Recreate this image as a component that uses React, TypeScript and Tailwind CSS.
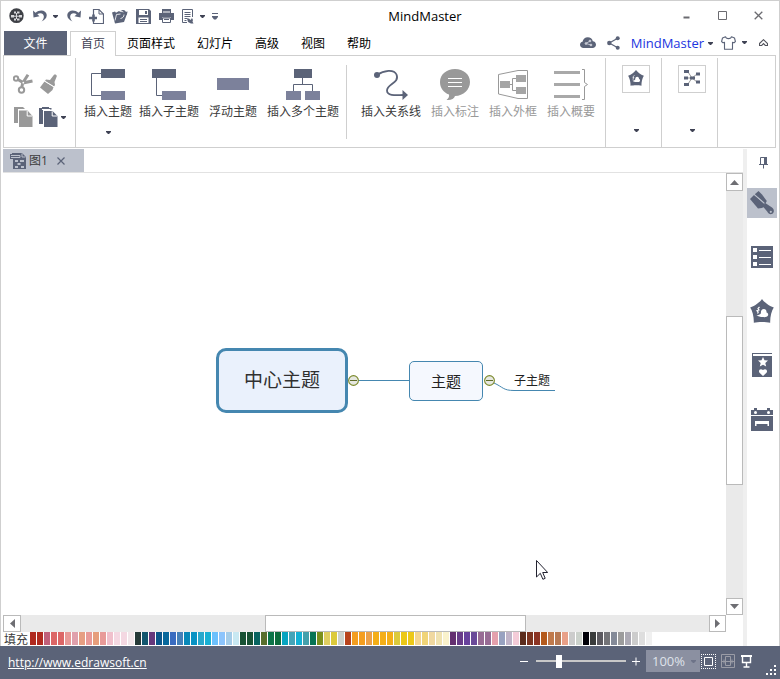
import React, { useState } from 'react';

type IconProps = { className?: string };

const menuTabs = ['页面样式', '幻灯片', '高级', '视图', '帮助'];

const swatches = [
    '#b02a1f', '#b02a1f', '#c0607a', '#dc6666', '#dc6666', '#e89a98', '#e0a0ac', '#e69e82', '#e89a98', '#e69e7c',
    '#e89a98', '#f0c0cc', '#f4d8e2', '#f4d8e2', '#f2e6ea', '#263a38', '#12566e', '#66387c', '#0c568a', '#08689c',
    '#3a6cc0', '#4680b8', '#0888b8', '#0892c4', '#28a8cc', '#18b0d4', '#6cc0fc', '#8cc4fc', '#a4cce8', '#c8e8f2',
    '#185234', '#185234', '#086460', '#586e2c', '#0c7448', '#0c6c3c', '#08a4c0', '#44a4b8', '#14b0d4', '#44a0ac',
    '#087454', '#7c901c', '#e0ce60', '#dcca3c', '#ccd2cc', '#b8441c', '#f49e20', '#f49e20', '#eca048', '#f4ae18',
    '#f4ae18', '#f4ae18', '#dcca3c', '#ecc818', '#ecc818', '#f4d690', '#f0d478', '#f0d8a0', '#f0e2b0', '#faf2cc',
    '#643070', '#683c88', '#68429c', '#6a4a98', '#986c94', '#986c94', '#e4a0ac', '#98a2c0', '#c0b4c8', '#f4ccd8',
    '#5c2c1c', '#7c3420', '#8c3424', '#b45a1c', '#c07a4c', '#b87a54', '#e8a088', '#cccccc', '#ccd2cc', '#000008',
    '#3a3c3c', '#5c5a60', '#747478', '#848a98', '#9c9c9c', '#acaab4', '#cccccc', '#dedede', '#f0f0f0',
];

const Caret = ({ className = 'text-[#3f4254]' }: IconProps) => (
    <svg width="5" height="3" viewBox="0 0 5 3" fill="currentColor" className={`shrink-0 ${className}`}>
        <path d="M0 0h5v1L3 3H2L0 1z" />
    </svg>
);

/* Quick access icons */
const LogoIcon = () => (
    <svg width="15" height="16" viewBox="0 0 15 16">
        <ellipse cx="7.5" cy="7.700" rx="7.2" ry="7.4" fill="#3e4046" />
        <path d="M5 3.500h2v2H5zM8 3.500h2.500v2H8zM2 7h3v2.500H2zM10 7h3v2.500h-3zM5 10.500h2v2H5zM8 10.500h2.500v2H8z" fill="#d8d8dc" />
        <path d="M7.500 5v6M4.500 8.200h6" stroke="#d8d8dc" strokeWidth="1" />
    </svg>
);

const UndoIcon = ({ className = '' }: IconProps) => (
    <svg width="14" height="14" viewBox="0 0 14 14" className={className}>
        <path d="M0 1.500 0.500 8.500 6.500 7.200 4.300 5.300C7 3.300 10.500 4 10.800 7.200c.2 2-.8 3.600-2.300 5.300C12 11 14 8.800 13.700 5.700 13.300 1.200 7-.2 2.500 3.700z" fill="currentColor" />
    </svg>
);

const NewIcon = () => (
    <svg width="15" height="16" viewBox="0 0 15 16" fill="none" stroke="currentColor">
        <path d="M4.500 7V1.500H10L14.500 6v9.500h-10V13" strokeWidth="1.200" />
        <path d="M10 1.500V6h4.500" />
        <path d="M0 10h8M4.500 6.500v7" strokeWidth="2.600" />
    </svg>
);

const OpenIcon = () => (
    <svg width="16" height="15" viewBox="0 0 16 15" fill="currentColor">
        <path d="M0 3.500 3 2.500l1 1.200L7 2l1.500 1L15.500 3.500 12 13 3 14.500z" />
        <path d="M8 2.500C10.500.3 13 .5 14 3l1.500-.8L14.500 6 11 4.500l1.300-.7C11.500 2 10 1.800 8 2.500z" />
        <path d="M3 11.500 4.500 5.500 8.500 5M8.500 9.500c2.500-.5 3.500-2 3.500-4" stroke="#fff" fill="none" strokeWidth=".8" />
    </svg>
);

const SaveIcon = () => (
    <svg width="15" height="15" viewBox="0 0 15 15">
        <path d="M0 0h13l2 2v13H0z" fill="currentColor" />
        <path d="M3 1h9v5H3zM2.500 8.500h10V14h-10z" fill="#fff" />
        <path d="M9 2h2v3H9zM4 10h7v1H4zM4 12h7v1H4z" fill="currentColor" />
    </svg>
);

const PrintIcon = () => (
    <svg width="15" height="14" viewBox="0 0 15 14" fill="currentColor">
        <path d="M3 0h9v4H3zM0 4h15v7h-3V8.500H3V11H0z" />
        <path d="M3.500 9h8v4.500h-8z" fill="#fff" stroke="currentColor" />
        <path d="M5 10h5v1H5z" />
        <path d="M4 2.500h7v1H4z" fill="#fff" />
    </svg>
);

const PreviewIcon = () => (
    <svg width="12" height="15" viewBox="0 0 12 15" fill="none" stroke="currentColor">
        <path d="M5 13.500H.5V.5h10V8M2.500 3.500h6M2.500 5.500h6M2.500 7.500h6M2.500 9.500h3M2.500 11.500h2" />
        <path d="M5 9.500h2l1.500 1.500L10 9l1 2-.5 1.500 1 2H9L6 13z" fill="currentColor" stroke="none" />
    </svg>
);

const MoreIcon = () => (
    <svg width="6" height="7" viewBox="0 0 6 7" fill="currentColor">
        <path d="M0 0h6v1H0zM0 3h6v1L4 6.500H2L0 4z" />
    </svg>
);

/* Account icons */
const CloudIcon = () => (
    <svg width="16" height="11" viewBox="0 0 16 11">
        <path d="M3.500 11C1.500 11 0 9.700 0 7.800 0 6.200 1 5 2.500 4.800 3 2 5 .2 7.800.2c2.500 0 4.500 1.300 5 4C14.700 4.400 16 5.800 16 7.600 16 9.600 14.500 11 12.600 11z" fill="currentColor" />
        <g stroke="#c9ccd6" strokeWidth=".9" fill="#c9ccd6">
            <path d="M10 4 6 6.500l5 1.500" fill="none" />
            <circle cx="10" cy="4" r=".9" />
            <circle cx="6" cy="6.500" r=".9" />
            <circle cx="11" cy="8" r=".9" />
        </g>
    </svg>
);

const ShareIcon = () => (
    <svg width="13" height="14" viewBox="0 0 13 14" fill="currentColor">
        <circle cx="10.700" cy="2.200" r="2" />
        <circle cx="2.300" cy="7" r="2.200" />
        <circle cx="10.700" cy="11.700" r="2" />
        <path d="M10.700 2.200 2.300 7l8.400 4.700" fill="none" stroke="currentColor" strokeWidth="1.200" />
    </svg>
);

const ShirtIcon = () => (
    <svg width="15" height="14" viewBox="0 0 15 14" fill="none" stroke="currentColor" strokeWidth="1.100">
        <path d="M4.500.7 1.500 2 .6 5.500 2 6.800l1.500-.6v7h8v-7l1.500.6 1.400-1.300L13.500 2l-3-1.300C10 3.300 5 3.300 4.500.7z" strokeLinejoin="round" />
    </svg>
);

const CollapseIcon = () => (
    <svg width="9" height="8" viewBox="0 0 9 8" fill="none" stroke="#50515a" strokeWidth="1.100">
        <path d="M.5 4.500 4.500.7l4 3.800v2H6.300L4.500 4.600 2.700 6.500H.5z" />
    </svg>
);

/* Clipboard icons */
const CutIcon = () => (
    <svg width="20" height="20" viewBox="0 0 20 20" fill="none" stroke="#999" strokeWidth="2">
        <circle cx="3" cy="4.500" r="2.200" />
        <circle cx="8.500" cy="16" r="2.700" />
        <path d="M5 5.500 10.500 8.800 19.500 7M8.800 13.300 9.700 9 15 .8" strokeWidth="3" />
        <circle cx="10.300" cy="8.700" r=".9" fill="#fff" stroke="none" />
    </svg>
);

const FormatIcon = () => (
    <svg width="18" height="20" viewBox="0 0 18 20" fill="#999">
        <path d="M14 .8c1.200-1 3.300.2 2.700 1.800L14.500 8l.5 3-1 1.500L5 7l1-1.500 4 .5z" />
        <path d="M4.500 7.500 13.500 13l-1 3-4.500 4L0 13.500z" />
        <path d="M4.500 7l9.500 5.800" stroke="#fff" strokeWidth=".9" />
    </svg>
);

const PagesIcon = () => (
    <svg width="19" height="20" viewBox="0 0 19 20" fill="currentColor">
        <path d="M0 0h9l2 2H4v14H0z" />
        <path d="M5 3.500h8.500L18.500 9v11H5z" />
        <path d="M13.200 3.800V9h5" fill="none" stroke="#fff" />
    </svg>
);

const PasteIcon = () => (
    <svg width="19" height="20" viewBox="0 0 19 20" fill="currentColor">
        <path d="M0 1h3V0h7v1h2.500v1.500H4V17H0z" />
        <path d="M5 4h8.500L18.500 9v11H5z" />
        <path d="M3 2.500h8M13.200 4.300V9h5" fill="none" stroke="#fff" />
    </svg>
);

/* Ribbon icons */
const TopicIcon = () => (
    <svg width="34" height="32" viewBox="0 0 34 32">
        <path d="M10 4.500H.5v22H10" fill="none" stroke="#5b6378" />
        <path d="M10 0h24v9H10z" fill="#5b6378" />
        <path d="M10 22h24v9H10z" fill="#7c819b" />
    </svg>
);

const SubtopicIcon = () => (
    <svg width="34" height="32" viewBox="0 0 34 32">
        <path d="M4.500 9v17.500H10" fill="none" stroke="#5b6378" />
        <path d="M0 0h24v9H0z" fill="#5b6378" />
        <path d="M10 22h24v9H10z" fill="#7c819b" />
    </svg>
);

const FloatingIcon = () => (
    <svg width="32" height="32" viewBox="0 0 32 32">
        <path d="M0 9h32v12H0z" fill="#7c819b" />
    </svg>
);

const MultiIcon = () => (
    <svg width="34" height="32" viewBox="0 0 34 32">
        <path d="M16.500 9v6.500M7.500 22v-6.500h19V22" fill="none" stroke="#5b6378" />
        <path d="M8 0h18v9H8z" fill="#5b6378" />
        <path d="M0 22h15v9H0zM19 22h15v9H19z" fill="#7c819b" />
    </svg>
);

const RelationIcon = () => (
    <svg width="34" height="32" viewBox="0 0 34 32">
        <path d="M3 6C10 1 20 0 22.500 5.500 26 14 13 15 13 21.500c0 5 7 5 16 4.500" fill="none" stroke="#5b6378" strokeWidth="1.800" />
        <circle cx="3" cy="6" r="3" fill="#5b6378" />
        <path d="M28.500 21 34 26l-5.500 5z" fill="#5b6378" />
    </svg>
);

const CalloutIcon = () => (
    <svg width="30" height="32" viewBox="0 0 30 32">
        <path d="M15 0c8.500 0 15 5.500 15 13S23.500 27 15 27c-1 3-4 4.500-8.500 4 2-1.500 3-3.500 2.500-5.500C3.500 23.500 0 19 0 13 0 5.500 6.500 0 15 0z" fill="#999" />
        <path d="M8 9.500h14M8 13.500h14M8 17.500h14" stroke="#fff" />
    </svg>
);

const BoundaryIcon = () => (
    <svg width="30" height="32" viewBox="0 0 30 32" fill="none" stroke="#999">
        <path d="M.5 5.500 20 1.500h9.500v28H20L.5 25z" />
        <path d="M12 15.500h2.500M18 9.500h-3.500v12H18" />
        <path d="M2 12h10v7H2zM18 6h10v7H18zM18 18h10v7H18z" fill="#a5a5a5" stroke="none" />
    </svg>
);

const SummaryIcon = () => (
    <svg width="34" height="32" viewBox="0 0 34 32" fill="none" stroke="#a9a9a9">
        <path d="M0 3.500h26M0 15.500h26M0 27.500h26" strokeWidth="3" />
        <path d="M28 .5h2.500v13l3 2-3 2v13H28" stroke="#999" />
    </svg>
);

const PentagonIcon = ({ className = '' }: IconProps) => (
    <svg viewBox="0 0 24 24" className={className}>
        <path d="M12 0C14 3 19 7 23.800 8.500 21.500 12 20 18 20.200 23.800 16 22.800 8 22.800 3.800 23.800 4 18 2.500 12 .2 8.500 5 7 10 3 12 0z" fill="currentColor" />
        <path d="M11 14c-.5-2 .8-4 2.800-4 1.800 0 3 1.500 2.700 3.500 1.500.5 2 1.800 1.500 3-.8 1.600-2.500 1.700-5 1.600-2.800 0-5-.6-6.500-2 2 .3 3.800-.6 4.500-2.100z" fill="#fff" />
        <path d="M9.500 8 8 9.500l1 1.500-2 .7 1.200 1.300-.7 1.500" fill="none" stroke="#fff" strokeWidth="1.200" />
    </svg>
);

const LayoutIcon = () => (
    <svg width="16" height="16" viewBox="0 0 16 16">
        <path d="M4 2l4 6 5-4M4 8h4M4 14l4-6 5 4" fill="none" stroke="#999" />
        <path d="M0 0h5v3H0zM0 6.500h4v3H0zM0 13h5v3H0zM6 6.500h5v3H6zM12 2.500h4v3h-4zM12 10.500h4v3h-4z" fill="currentColor" />
    </svg>
);

const DocIcon = () => (
    <svg width="16" height="16" viewBox="0 0 16 16">
        <path d="M2 0h10l4 4v12H3V6H0V1h2z" fill="currentColor" />
        <path d="M1 2.500h9v2H1M12 .5V4h3.500" fill="none" stroke="#bcc1cc" />
        <path d="M5 7h3v2H5zM10 7h4v2h-4zM7.500 10h3v2h-3zM5 13h3v2H5zM11 13h3v2h-3z" fill="#bcc1cc" />
    </svg>
);

/* Side panel icons */
const PinIcon = () => (
    <svg width="9" height="12" viewBox="0 0 9 12">
        <path d="M1.500 7V.5h6V7M0 7.500h9M4.500 8v3.500" fill="none" stroke="currentColor" />
        <path d="M5 0h3v7H5z" fill="currentColor" />
    </svg>
);

const BrushIcon = () => (
    <svg width="24" height="24" viewBox="0 0 24 24" fill="currentColor">
        <path d="M8.500 0 12 3.500 16.800 10 15.500 12.500 4.800 3.300z" />
        <path d="M4 4 14.500 13l.3 2.500-3 1.500L8 17.500 0 8z" />
        <path d="M14.500 11.500 22 16.500c2.300 1.700 2.500 4.800.4 6.200-2 1.100-4.200 0-5-1.900L12.500 15z" />
        <path d="M4.300 3.600 14.500 12.700" stroke="#bcc1cc" strokeWidth=".8" />
        <circle cx="20.800" cy="20.800" r="1.100" fill="#bcc1cc" />
    </svg>
);

const OutlineIcon = () => (
    <svg width="22" height="22" viewBox="0 0 22 22">
        <path d="M0 0h22v22H0z" fill="currentColor" />
        <path d="M2 2h4v4H2zM2 9h4v4H2zM2 16h4v4H2zM8 4h12v1H8zM8 11h12v1H8zM8 18h12v1H8z" fill="#fff" />
    </svg>
);

const LibraryIcon = () => (
    <svg width="20" height="24" viewBox="0 0 20 24">
        <path d="M0 0h20v1H1v2h19v21H0z" fill="currentColor" />
        <path d="m11 4 1.500 3.300 3.500.3-2.700 2.400.9 3.500L11 11.700l-3.200 1.800.9-3.500L6 7.600l3.500-.3zM11 23l-3.500-3.300c-1.500-2 .5-4.700 3.500-2.700 3-2 5 .7 3.500 2.700z" fill="#fff" />
    </svg>
);

const TaskIcon = () => (
    <svg width="22" height="23" viewBox="0 0 22 23">
        <path d="M0 2h3V0h3v2h10V0h3v2h3v5H0zM0 8h22v15H0z" fill="currentColor" />
        <path d="M4 13h14v5h-1.500v-2h-11v2H4z" fill="#fff" />
        <circle cx="4.500" cy="4.500" r="1.500" fill="#fff" />
        <circle cx="17.500" cy="4.500" r="1.500" fill="#fff" />
    </svg>
);

const quickButtons = [
    { label: '新建', icon: <NewIcon /> },
    { label: '打开', icon: <OpenIcon /> },
    { label: '保存', icon: <SaveIcon /> },
    { label: '打印', icon: <PrintIcon /> },
];

const sideButtons = [
    { label: '格式', icon: <BrushIcon /> },
    { label: '大纲', icon: <OutlineIcon /> },
    { label: '剪贴画', icon: <PentagonIcon className="size-6" /> },
    { label: '符号', icon: <LibraryIcon /> },
    { label: '任务', icon: <TaskIcon /> },
];

function RibbonButton({ label, icon, disabled = false, menu = false }: { label: string; icon: React.ReactNode; disabled?: boolean; menu?: boolean }) {
    return (
        <button disabled={disabled} className="flex shrink-0 flex-col items-center text-[#3b3b3b] disabled:text-[#999]">
            <span className="flex h-[33px] items-start">{icon}</span>
            <span className="leading-5 whitespace-nowrap">{label}</span>
            {menu && <Caret className="mt-[9px] text-[#3f4254]" />}
        </button>
    );
}

function ArrowButton({ label, points, className }: { label: string; points: string; className: string }) {
    return (
        <button aria-label={label} className={`flex shrink-0 items-center justify-center border border-[#bababa] bg-white ${className}`}>
            <svg width="9" height="9" viewBox="0 0 9 9" fill="#6e6e73">
                <polygon points={points} />
            </svg>
        </button>
    );
}

function CollapseDot({ className }: { className: string }) {
    return (
        <button aria-label="折叠" className={`absolute size-[11px] ${className}`}>
            <svg width="11" height="11" viewBox="0 0 11 11" className="block">
                <circle cx="5.500" cy="5.500" r="4.900" fill="#e6e7e0" stroke="#7c8a2c" strokeWidth="1.100" />
                <path d="M2 5.500h7" stroke="#5f6b28" />
            </svg>
        </button>
    );
}

function TitleBar() {
    return (
        <header className="flex h-[30px] items-center">
            <div className="flex items-center pl-2 text-[#5b6378]">
                <LogoIcon />
                <button aria-label="撤销" className="ml-[9px]"><UndoIcon /></button>
                <Caret className="ml-1.5 text-[#3f4254]" />
                <button aria-label="重做" className="ml-[9px]"><UndoIcon className="-scale-x-100" /></button>
                <div className="ml-2 flex gap-2">
                    {quickButtons.map((item) => (
                        <button key={item.label} aria-label={item.label}>{item.icon}</button>
                    ))}
                </div>
                <button aria-label="预览" className="ml-2"><PreviewIcon /></button>
                <Caret className="ml-1.5 text-[#3f4254]" />
                <button aria-label="更多" className="ml-[7px]"><MoreIcon /></button>
            </div>
            <h1 className="flex-1 pt-0.5 pr-9 text-center text-[13px]">MindMaster</h1>
            <div className="flex pr-[3px] pb-0.5 text-[#6b6b70]">
                <button aria-label="最小化" className="flex h-6 w-9 items-center justify-center">
                    <svg width="9" height="9" viewBox="0 0 9 9"><path d="M1.500 5.500h6v2h-6z" fill="currentColor" /></svg>
                </button>
                <button aria-label="最大化" className="flex h-6 w-9 items-center justify-center">
                    <svg width="9" height="9" viewBox="0 0 9 9"><path d="M.5.5h8v8h-8z" fill="none" stroke="currentColor" /></svg>
                </button>
                <button aria-label="关闭" className="flex h-6 w-9 items-center justify-center">
                    <svg width="9" height="9" viewBox="0 0 9 9"><path d="M.7.700l7.600 7.600M8.300.700.700 8.300" stroke="currentColor" strokeWidth="1.300" /></svg>
                </button>
            </div>
        </header>
    );
}

function MenuBar() {
    return (
        <nav className="flex h-6 items-center pl-[3px]">
            <button className="h-6 w-[63px] bg-[#5b6378] pt-0.5 text-white">文件</button>
            <button className="relative z-10 -mb-px ml-[3px] h-[25px] border border-b-0 border-[#cfcfcf] bg-white px-2.5 text-[#3f4254]">首页</button>
            {menuTabs.map((tab) => (
                <button key={tab} className="px-[11px] pt-0.5 whitespace-nowrap">{tab}</button>
            ))}
            <div className="ml-auto flex items-center pr-[11px] text-[#5b6378]">
                <button aria-label="云"><CloudIcon /></button>
                <button aria-label="分享" className="ml-[11px]"><ShareIcon /></button>
                <button className="ml-[11px] flex items-center gap-1 pt-0.5 text-[13px] text-[#1c35e0]">
                    MindMaster
                    <Caret />
                </button>
                <button aria-label="主题" className="ml-2 flex items-center gap-1.5">
                    <ShirtIcon />
                    <Caret />
                </button>
                <button aria-label="收起" className="ml-3"><CollapseIcon /></button>
            </div>
        </nav>
    );
}

function Ribbon() {
    return (
        <div className="mr-[3px] ml-[2px] flex h-[93px] border border-[#cfcfcf]">
            {/* Clipboard */}
            <div className="mt-0.5 flex w-[72px] shrink-0 flex-col gap-[13px] border-r border-[#cfcfcf] pt-4 pl-[9px] text-[#5b6378]">
                <div className="flex gap-[7px]">
                    <button aria-label="剪切"><CutIcon /></button>
                    <button aria-label="格式刷"><FormatIcon /></button>
                </div>
                <div className="flex items-center">
                    <button aria-label="复制" className="pl-px text-[#999]"><PagesIcon /></button>
                    <button aria-label="粘贴" className="ml-1.5 flex items-center gap-[3px]">
                        <PasteIcon />
                        <Caret />
                    </button>
                </div>
            </div>

            {/* Insert */}
            <div className="mt-0.5 flex shrink-0 border-r border-[#cfcfcf] pt-[11px] pr-2.5 pl-2">
                <div className="flex items-start gap-[7px]">
                    <RibbonButton label="插入主题" icon={<TopicIcon />} menu />
                    <div className="flex gap-2.5">
                        <RibbonButton label="插入子主题" icon={<SubtopicIcon />} />
                        <RibbonButton label="浮动主题" icon={<FloatingIcon />} />
                        <RibbonButton label="插入多个主题" icon={<MultiIcon />} />
                    </div>
                </div>
                <div className="-mt-1 mr-3.5 mb-2 ml-[7px] w-px bg-[#cfcfcf]" />
                <div className="flex items-start gap-2.5">
                    <RibbonButton label="插入关系线" icon={<RelationIcon />} />
                    <RibbonButton label="插入标注" icon={<CalloutIcon />} disabled />
                    <RibbonButton label="插入外框" icon={<BoundaryIcon />} disabled />
                    <RibbonButton label="插入概要" icon={<SummaryIcon />} disabled />
                </div>
            </div>

            {/* Collapsed groups */}
            {[<PentagonIcon className="size-4" />, <LayoutIcon />].map((icon, i) => (
                <div key={i} className="mt-0.5 w-14 shrink-0 border-r border-[#cfcfcf] pt-[7px] pl-4">
                    <button aria-label={i === 0 ? '插入' : '布局'} className="flex w-7 flex-col items-center text-[#5b6378]">
                        <span className="flex size-7 items-center justify-center border border-[#cfcfcf] pb-0.5">{icon}</span>
                        <Caret className="mt-9 text-[#3f4254]" />
                    </button>
                </div>
            ))}
        </div>
    );
}

function MindMap() {
    return (
        <div className="relative min-h-60 flex-1 overflow-hidden bg-white">
            <svg width="342" height="70" className="absolute top-[175px] left-[213px]" fill="none" stroke="#4587b0">
                <path d="M142 32.500h52" />
                <path d="M278 35c9 4 9 7.500 20 7.500h41" />
            </svg>
            <div className="absolute top-[175px] left-[213px] flex h-[65px] w-[132px] items-center justify-center rounded-[10px] border-[3px] border-[#4587b0] bg-[#eaf1fc] text-[19px] text-[#303030]">
                中心主题
            </div>
            <div className="absolute top-[188px] left-[406px] flex h-10 w-[74px] items-center justify-center rounded-[5px] border border-[#4587b0] bg-[#f5f8fe] text-[15px] text-[#222]">
                主题
            </div>
            <div className="absolute top-[198px] left-[511px] text-xs leading-5 text-[#222]">子主题</div>
            <CollapseDot className="top-[202px] left-[345px]" />
            <CollapseDot className="top-[202px] left-[481px]" />
            {/* Pointer */}
            <svg width="12" height="20" viewBox="0 0 12 20" className="absolute top-[387px] left-[533px]">
                <path d="M.5.5v16.500l3.800-3.700 2.600 6 2.300-1-2.500-5.800h5z" fill="#fff" stroke="#222230" />
            </svg>
        </div>
    );
}

function StatusBar() {
    const [zoom, setZoom] = useState(29);

    return (
        <footer className="flex h-[33px] shrink-0 items-center bg-[#5b6378] pl-2 text-white">
            <a href="http://www.edrawsoft.cn" className="text-xs underline">http://www.edrawsoft.cn</a>
            <div className="ml-auto flex items-center self-stretch pb-[3px]">
                <button aria-label="缩小">
                    <svg width="8" height="9" viewBox="0 0 8 9"><path d="M0 4.500h8" stroke="#fff" /></svg>
                </button>
                <input
                    type="range"
                    aria-label="缩放"
                    min={0}
                    max={120}
                    value={zoom}
                    onChange={(e) => setZoom(Number(e.target.value))}
                    className="mr-1.5 ml-2 h-[13px] w-[90px] appearance-none bg-transparent bg-[linear-gradient(#c8c8c8,#c8c8c8)] bg-[length:100%_2px] bg-center bg-no-repeat [&::-webkit-slider-thumb]:h-[13px] [&::-webkit-slider-thumb]:w-1.5 [&::-webkit-slider-thumb]:appearance-none [&::-webkit-slider-thumb]:bg-white"
                />
                <button aria-label="放大">
                    <svg width="8" height="9" viewBox="0 0 8 9"><path d="M0 4.500h8M4 .5v8" stroke="#fff" /></svg>
                </button>
                <div className="ml-1.5 flex h-[22px] w-[54px] items-center bg-[#8b90a1] pr-1">
                    <select aria-label="缩放比例" className="min-w-0 flex-1 appearance-none pt-0.5 pl-1.5 text-[13px] text-[#dfe2ea]">
                        <option>100%</option>
                    </select>
                    <Caret className="text-[#6d7388]" />
                </div>
                <button aria-label="适合页面" className="ml-px">
                    <svg width="15" height="15" viewBox="0 0 15 15" fill="none" stroke="#fff">
                        <path d="M0 .5h15M0 14.500h15M.5 0v15M14.500 0v15" strokeDasharray="1 1" />
                        <path d="M3.500 3.500h8v8h-8z" />
                    </svg>
                </button>
                <button aria-label="适合宽度" className="ml-[5px]">
                    <svg width="14" height="14" viewBox="0 0 14 14" fill="none" stroke="#9a9ca6">
                        <path d="M.5.5h13v13H.5zM4.500 2.500h5v9h-5zM1 7.500h12M3 5.500v4M11 5.500v4" />
                    </svg>
                </button>
                <button aria-label="演示" className="ml-1.5">
                    <svg width="11" height="13" viewBox="0 0 11 13" fill="none" stroke="#fff">
                        <path d="M0 1h11" strokeWidth="2" />
                        <path d="M1.500 2v5.500h8V2M5.500 8v4M2.500 12h6" strokeWidth="1.400" />
                    </svg>
                </button>
            </div>
            <svg width="10" height="10" viewBox="0 0 10 10" fill="#fff" className="mr-1 mb-1 ml-3.5 self-end">
                <path d="M8 0h2v2H8zM4 4h2v2H4zM8 4h2v2H8zM0 8h2v2H0zM4 8h2v2H4zM8 8h2v2H8z" />
            </svg>
        </footer>
    );
}

export default function App() {
    const [active, setActive] = useState('格式');

    return (
        <div className="flex min-h-screen flex-col bg-white font-['Open_Sans','Noto_Sans_CJK_SC',sans-serif] text-xs text-black">
            <div className="flex flex-1 flex-col border-x border-t border-[#cfcfcf]">
                <TitleBar />
                <MenuBar />
                <Ribbon />

                <div className="mt-px flex flex-1">
                    <main className="flex min-w-0 flex-1 flex-col pl-[2px]">
                        {/* Document tabs */}
                        <div className="flex h-6 border-b border-[#e2e2e2]">
                            <div className="flex h-[23px] w-[81px] items-center bg-[#bcc1cc] pl-[7px] text-[#5b6378]">
                                <DocIcon />
                                <span className="ml-[3px] text-[#3b3b3b]">图1</span>
                                <button aria-label="关闭标签" className="ml-[9px]">
                                    <svg width="8" height="8" viewBox="0 0 8 8"><path d="M.5.5l7 7M7.500.5l-7 7" stroke="currentColor" strokeWidth="1.200" /></svg>
                                </button>
                            </div>
                        </div>

                        <div className="flex flex-1">
                            <MindMap />
                            <div className="flex w-[17px] shrink-0 flex-col bg-[#eaeaea]">
                                <ArrowButton label="向上" points="0,7 4.500,2 9,7" className="h-[18px]" />
                                <div className="grow-[126] basis-0" />
                                <div className="grow-[167] basis-0 border border-[#bababa] bg-white" />
                                <div className="grow-[114] basis-0" />
                                <ArrowButton label="向下" points="0,2 9,2 4.500,7" className="h-[17px]" />
                            </div>
                        </div>

                        <div className="mr-[17px] flex h-[17px] bg-[#eaeaea]">
                            <ArrowButton label="向左" points="7,0 7,9 2,4.500" className="w-[18px]" />
                            <div className="grow-[245] basis-0" />
                            <div className="grow-[260] basis-0 border border-[#bababa] bg-white" />
                            <div className="grow-[184] basis-0" />
                            <ArrowButton label="向右" points="2,0 7,4.500 2,9" className="w-[17px]" />
                        </div>

                        {/* Fill colours */}
                        <div className="flex h-3.5 pl-px">
                            <span className="w-[26px] shrink-0 leading-4 text-[#3b3b3b]">填充</span>
                            <div className="flex h-[13px] gap-px">
                                {swatches.map((color, i) => (
                                    <button key={i} aria-label={color} className="w-1.5 shrink-0" style={{ backgroundColor: color }} />
                                ))}
                            </div>
                        </div>
                    </main>

                    <div className="w-1 shrink-0 bg-[#efefef]" />

                    {/* Side panel */}
                    <aside className="flex w-8 shrink-0 flex-col items-start text-[#5b6378]">
                        <button aria-label="固定" className="flex h-[39px] w-8 justify-center pt-2"><PinIcon /></button>
                        <div className="flex flex-col gap-6">
                            {sideButtons.map((item) => (
                                <button
                                    key={item.label}
                                    aria-label={item.label}
                                    onClick={() => setActive(item.label)}
                                    className={`flex size-[30px] items-center justify-center ${active === item.label ? 'bg-[#bcc1cc]' : ''}`}
                                >
                                    {item.icon}
                                </button>
                            ))}
                        </div>
                    </aside>
                </div>
            </div>
            <StatusBar />
        </div>
    );
}
